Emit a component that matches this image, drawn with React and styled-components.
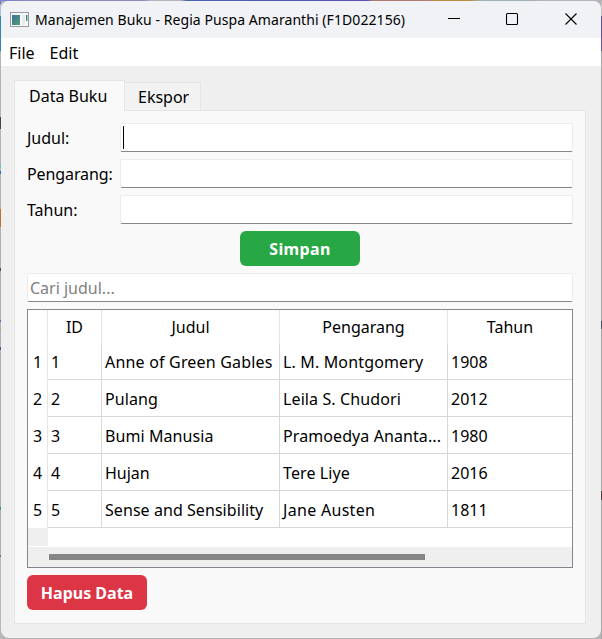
import React from "react";
import styled, { createGlobalStyle } from "styled-components";

const Global = createGlobalStyle`
  * { box-sizing: border-box; }
  body { margin: 0; overflow: hidden; }
  input, button { font: inherit; }
`;

const Desktop = styled.div`
  width: 602px;
  height: 639px;
  padding: 1px 1px 1px 0;
  background:
    linear-gradient(90deg, #7a7fd0 0 1%, #8d8bc0 5% 24%, #b4b4bc 25% 30%, #4a62b0 31%, #5a51b4 61%, #b07a70 62% 71%, #b98f3f 72% 78%, #9fb0b8 80% 88%, #b4b4b8 90%) 0 0 / 602px 1px no-repeat,
    linear-gradient(180deg, #6a74e0 0 4px, #a9c0d8 4px 16px, #2f86b0 16px 51px, #b4b4b4 51px 117px, #4a4040 117px 129px, #b4b4b4 129px 164px, #7fb8c8 164px 168px, #b4b4b4 168px 171px, #3a6aa8 171px 174px, #b4b4b4 174px 209px, #c07030 209px 227px, #b0b0b0 227px 268px, #504848 268px 271px, #b0b0b0 271px 320px, #4a74a8 320px 322px, #b0b0b0 322px 328px, #c0a070 328px 330px, #b0b0b0 330px 347px, #385888 347px 350px, #b0b0b0 350px 507px, #4a8a80 507px 510px, #b0b0b0 510px 555px, #707088 555px 557px, #b8b8b8 557px) 0 0 / 1px 639px no-repeat,
    linear-gradient(180deg, #c4c4c4 0 16px, #6a4fb0 16px 51px, #a8a8a8 51px 321px, #485068 321px 329px, #a8a8a8 329px 491px, #504040 491px 500px, #a8a8a8 500px) 601px 0 / 1px 639px no-repeat,
    #b4b4b4;
`;

const Window = styled.div`
  display: flex;
  flex-direction: column;
  width: 600px;
  height: 637px;
  margin-left: 1px;
  border-radius: 8px;
  overflow: hidden;
  background: #efefef;
  color: #000;
  font: 16px/20px "Noto Sans", "Open Sans", sans-serif;
`;

const Label = styled.span`
  white-space: pre;
  letter-spacing: ${(p) => p.$ls || 0}px;
`;

const TitleBar = styled.header`
  display: flex;
  align-items: center;
  flex: 0 0 37px;
  padding-left: 9px;
  background: #f0f2f5;
  font-size: 14px;
`;

const Title = styled(Label)`
  flex: 1;
  margin-left: 5px;
`;

const Controls = styled.div`
  display: flex;
  width: 175px;
  svg { display: block; }
`;

const MenuBar = styled.nav`
  display: flex;
  flex: 0 0 28px;
  align-items: center;
  gap: 15px;
  padding: 1px 0 0 8px;
  background: #fff;
`;

const Body = styled.main`
  flex: 1;
  padding: 14px 15px 15px 13px;
`;

const Tabs = styled.div`
  display: flex;
  align-items: flex-end;
  height: 30px;
`;

const Tab = styled.div`
  height: ${(p) => (p.$active ? 31 : 28)}px;
  width: ${(p) => (p.$active ? 111 : 76)}px;
  margin-bottom: ${(p) => (p.$active ? -1 : 0)}px;
  padding: ${(p) => (p.$active ? "5px 0 0 14px" : "4px 0 0 13px")};
  border: 1px solid #e5e5e5;
  border-left-width: ${(p) => (p.$active ? 1 : 0)}px;
  border-bottom: 0;
  background: ${(p) => (p.$active ? "#f9f9f9" : "#f2f2f2")};
  z-index: ${(p) => (p.$active ? 1 : 0)};
`;

const Pane = styled.section`
  display: flex;
  flex-direction: column;
  gap: 7px;
  height: 514px;
  padding: 12px;
  border: 1px solid #e5e5e5;
  background: #f9f9f9;
`;

const Form = styled.div`
  display: grid;
  grid-template-columns: 93px 1fr;
  grid-auto-rows: 29px;
  row-gap: 7px;
  align-items: center;
`;

const Field = styled.input`
  display: block;
  width: 100%;
  height: 29px;
  padding: 1px 2px 0;
  border: 1px solid #ececec;
  border-bottom-color: #868686;
  border-radius: 2px;
  outline: 0;
  background: #fff;
  letter-spacing: ${(p) => p.$ls || 0}px;
  &::placeholder { color: #808080; opacity: 1; }
`;

const FocusedField = styled.div`
  display: flex;
  height: 29px;
  padding: 2px;
  border: 1px solid #ececec;
  border-bottom-color: #868686;
  border-radius: 2px;
  background: #fff;
`;

const Caret = styled.i`
  width: 1px;
  height: 23px;
  background: #000;
`;

const Button = styled.button`
  align-self: ${(p) => p.$align};
  flex: 0 0 35px;
  width: 120px;
  padding: 0;
  border: 0;
  border-radius: 6px;
  background: ${(p) => p.$color};
  color: #fff;
  font-weight: 700;
`;

const TableFrame = styled.div`
  display: flex;
  flex-direction: column;
  height: 259px;
  border: 1px solid #84868e;
  background: #fff;
`;

const Table = styled.div`
  display: grid;
  grid-template-columns: 20px 54px 178px 168px 1fr;
  grid-template-rows: 33px repeat(5, 37px) 19px;
`;

const Cell = styled.div`
  display: flex;
  align-items: center;
  justify-content: ${(p) => (p.$head ? "center" : "flex-start")};
  padding: 2px 0 0 ${(p) => (p.$head ? 0 : 3)}px;
  border-right: ${(p) => (p.$last ? 0 : 1)}px solid ${(p) => (p.$head ? "#e5e5e5" : "#d8d8d8")};
  border-bottom: 1px solid ${(p) => (p.$head ? "transparent" : "#d8d8d8")};
`;

const Corner = styled.div`
  height: 18px;
  background: #efefef;
`;

const ScrollTrack = styled.div`
  display: flex;
  flex: 1;
  align-items: center;
  padding-left: 21px;
  background: #efefef;
`;

const ScrollThumb = styled.div`
  width: 376px;
  height: 6px;
  background: #868686;
`;

const heads = ["", "ID", "Judul", "Pengarang", "Tahun"];

/* Each cell is its text and its tracking. */
const rows = [
  [["1"], ["Anne of Green Gables", 0.19], ["L. M. Montgomery", 0.15], ["1908"]],
  [["2"], ["Pulang", 0.1], ["Leila S. Chudori", 0.11], ["2012"]],
  [["3"], ["Bumi Manusia", 0.08], ["Pramoedya Ananta...", 0.09], ["1980"]],
  [["4"], ["Hujan"], ["Tere Liye", 0.1], ["2016"]],
  [["5"], ["Sense and Sensibility", 0.06], ["Jane Austen", 0.3], ["1811"]],
];

function AppIcon() {
  return (
    <svg width="20" height="16" viewBox="0 0 20 16">
      <defs>
        <linearGradient id="screen" x1="0" y1="0" x2="1" y2="1">
          <stop offset="0" stopColor="#3f6fa0" />
          <stop offset="1" stopColor="#4fa070" />
        </linearGradient>
      </defs>
      <rect x=".5" y=".5" width="18" height="14" fill="#f8f8f8" stroke="#949ba1" />
      <rect x="2" y="3" width="8" height="10" fill="url(#screen)" />
      <rect x="12" y="3" width="3" height="10" fill="#e8eeee" />
      <rect x="16" y="3" width="1.5" height="6" fill="url(#screen)" />
    </svg>
  );
}

export default function App() {
  return (
    <Desktop>
      <Global />
      <Window>
        <TitleBar>
          <AppIcon />
          <Title $ls={0.07}>Manajemen Buku - Regia Puspa Amaranthi (F1D022156)</Title>
          <Controls>
            <svg width="175" height="37" viewBox="426 1 175 37" fill="none" stroke="#000" strokeWidth="1.1">
              <path d="M448 18.5h12" />
              <rect x="506.5" y="13.5" width="11" height="11" rx="1" />
              <path d="M565.5 13.5l11 11M576.5 13.5l-11 11" />
            </svg>
          </Controls>
        </TitleBar>
        <MenuBar><Label>File</Label><Label>Edit</Label></MenuBar>
        <Body>
          <Tabs>
            <Tab $active><Label>Data Buku</Label></Tab>
            <Tab><Label>Ekspor</Label></Tab>
          </Tabs>
          <Pane>
            <Form>
              <Label>Judul:</Label><FocusedField><Caret /></FocusedField>
              <Label $ls={-0.1}>Pengarang:</Label><Field />
              <Label>Tahun:</Label><Field />
            </Form>
            <Button $color="#28a745" $align="center"><Label $ls={0.35}>Simpan</Label></Button>
            <Field placeholder="Cari judul..." />
            <TableFrame>
              <Table>
                {heads.map((t, i) => (
                  <Cell key={i} $head $last={i === 4}><Label>{t}</Label></Cell>
                ))}
                {rows.map((r) => (
                  <React.Fragment key={r[0][0]}>
                    <Cell $head><Label>{r[0][0]}</Label></Cell>
                    {r.map(([t, ls], i) => <Cell key={i} $last={i === 3}><Label $ls={ls}>{t}</Label></Cell>)}
                  </React.Fragment>
                ))}
                <Corner />
              </Table>
              <ScrollTrack><ScrollThumb /></ScrollTrack>
            </TableFrame>
            <Button $color="#dc3545" $align="flex-start"><Label>Hapus Data</Label></Button>
          </Pane>
        </Body>
      </Window>
    </Desktop>
  );
}
